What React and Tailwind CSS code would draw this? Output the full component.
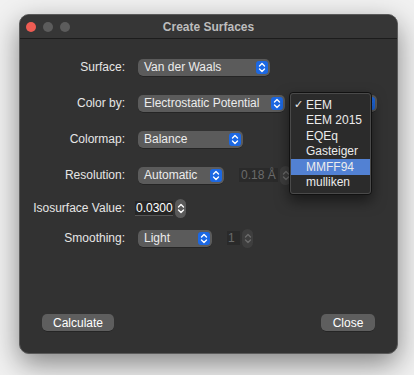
import React from 'react';

const font = { fontFamily: '"Liberation Sans", Arial, sans-serif' };

function Arrows({ className = 'stroke-white' }) {
  return (
    <svg width="8" height="11" viewBox="0 0 8 11" className={className} fill="none" strokeWidth="1.4" strokeLinecap="round" strokeLinejoin="round">
      <path d="M1.5 4 L4 1.5 L6.5 4" />
      <path d="M1.5 7 L4 9.5 L6.5 7" />
    </svg>
  );
}

function Popup({ value, className }) {
  return (
    <div className={`flex h-[17px] items-center justify-between rounded-[5px] bg-[#5b5b5b] pl-[6px] pr-[2px] shadow-[0_0.5px_0_rgba(0,0,0,0.5)] ${className}`}>
      <span className="text-[12px] leading-none text-[#ececec]">{value}</span>
      <span className="flex h-[13px] w-[12px] items-center justify-center rounded-[3px] bg-[#1c68e3]">
        <Arrows />
      </span>
    </div>
  );
}

function Stepper({ dim }) {
  return (
    <div className={`flex h-[19px] w-[11px] items-center justify-center rounded-full ${dim ? 'bg-[#3e3e3e]' : 'bg-[#5a5a5a]'}`}>
      <Arrows className={dim ? 'stroke-[#6a6a6a]' : 'stroke-white'} />
    </div>
  );
}

function Label({ children }) {
  return (
    <div className="flex w-[89px] shrink-0 justify-end whitespace-nowrap text-[12px] leading-none text-[#e6e6e6]">
      {children}
    </div>
  );
}

const methods = ['EEM', 'EEM 2015', 'EQEq', 'Gasteiger', 'MMFF94', 'mulliken'];

export default function App() {
  return (
    <div className="relative h-[375px] w-[414px] overflow-hidden bg-[#f1f1f1] pl-[19px] pt-[14px]" style={font}>
      <div className="relative flex h-[340px] w-[379px] flex-col overflow-hidden rounded-[10px] border border-[#5a5a5a] bg-[#323232] shadow-[0_10px_28px_rgba(0,0,0,0.45)]">
        {/* title bar */}
        <div className="relative flex h-[24px] shrink-0 items-center border-b border-[#1c1c1c] bg-[#363636]">
          <div className="absolute left-[6px] flex gap-[7px]">
            <span className="h-[10px] w-[10px] rounded-full bg-[#ee5c53]" />
            <span className="h-[10px] w-[10px] rounded-full bg-[#5c5c5c]" />
            <span className="h-[10px] w-[10px] rounded-full bg-[#5c5c5c]" />
          </div>
          <div className="flex-1 text-center text-[12px] font-bold text-[#bdbdbd]">Create Surfaces</div>
        </div>

        {/* form */}
        <div className="flex flex-col pl-[16px]">
          <div className="mt-[19px] flex h-[18px] items-center gap-[10px]">
            <Label>Surface:</Label>
            <Popup value="Van der Waals" className="ml-[3px] w-[132px]" />
          </div>

          <div className="mt-[18px] flex h-[18px] items-center gap-[10px]">
            <Label>Color by:</Label>
            <Popup value="Electrostatic Potential" className="ml-[3px] w-[147px]" />
            {/* charge method popup, covered by its open menu */}
            <Popup value="" className="-ml-[3px] w-[85px]" />
          </div>

          <div className="mt-[18px] flex h-[18px] items-center gap-[10px]">
            <Label>Colormap:</Label>
            <Popup value="Balance" className="ml-[3px] w-[105px]" />
          </div>

          <div className="mt-[18px] flex h-[18px] items-center gap-[10px]">
            <Label>Resolution:</Label>
            <Popup value="Automatic" className="ml-[3px] w-[86px]" />
            <div className="ml-[5px] flex items-center gap-[2px]">
              <div className="flex h-[14px] w-[39px] items-center bg-[#2a2a2a] pl-[2px] text-[12px] text-[#6b6b6b]">0.18 Å</div>
              <Stepper dim />
            </div>
          </div>

          <div className="mt-[15px] flex h-[18px] items-center gap-[10px]">
            <Label>Isosurface Value:</Label>
            <div className="flex items-center gap-[2px]">
              <div className="flex h-[15px] w-[38px] items-center border-b border-[#555] bg-[#262626] pl-[1px] text-[12px] text-white">0.0300</div>
              <Stepper />
            </div>
          </div>

          <div className="mt-[12px] flex h-[18px] items-center gap-[10px]">
            <Label>Smoothing:</Label>
            <Popup value="Light" className="ml-[3px] w-[74px]" />
            <div className="ml-[5px] flex items-center gap-[2px]">
              <div className="flex h-[14px] w-[13px] items-center bg-[#2a2a2a] pl-[1px] text-[12px] text-[#6b6b6b]">1</div>
              <Stepper dim />
            </div>
          </div>
        </div>

        {/* buttons */}
        <div className="mt-auto mb-[22px] flex justify-between px-[22px]">
          <button className="h-[17px] w-[72px] rounded-[5px] bg-[#5e5e5e] text-[12px] leading-none text-white shadow-[0_0.5px_0_rgba(0,0,0,0.5)]">Calculate</button>
          <button className="h-[17px] w-[54px] rounded-[5px] bg-[#5e5e5e] text-[12px] leading-none text-white shadow-[0_0.5px_0_rgba(0,0,0,0.5)]">Close</button>
        </div>
      </div>

      {/* open popup menu */}
      <div className="absolute left-[289px] top-[92px] w-[83px] rounded-[4px] border border-[#111] bg-[#2b2b2b] py-[4px] shadow-[0_6px_14px_rgba(0,0,0,0.5)] outline outline-1 outline-[#4a4a4a] -outline-offset-2">
        {methods.map((m, i) => (
          <div key={m} className={`flex h-[15.5px] items-center text-[12px] leading-none text-[#ececec] ${m === 'MMFF94' ? 'bg-[#5281d3]' : ''}`}>
            <span className="w-[16px] shrink-0 pl-[4px] text-[11px]">{i === 0 ? '✓' : ''}</span>
            <span>{m}</span>
          </div>
        ))}
      </div>
    </div>
  );
}
